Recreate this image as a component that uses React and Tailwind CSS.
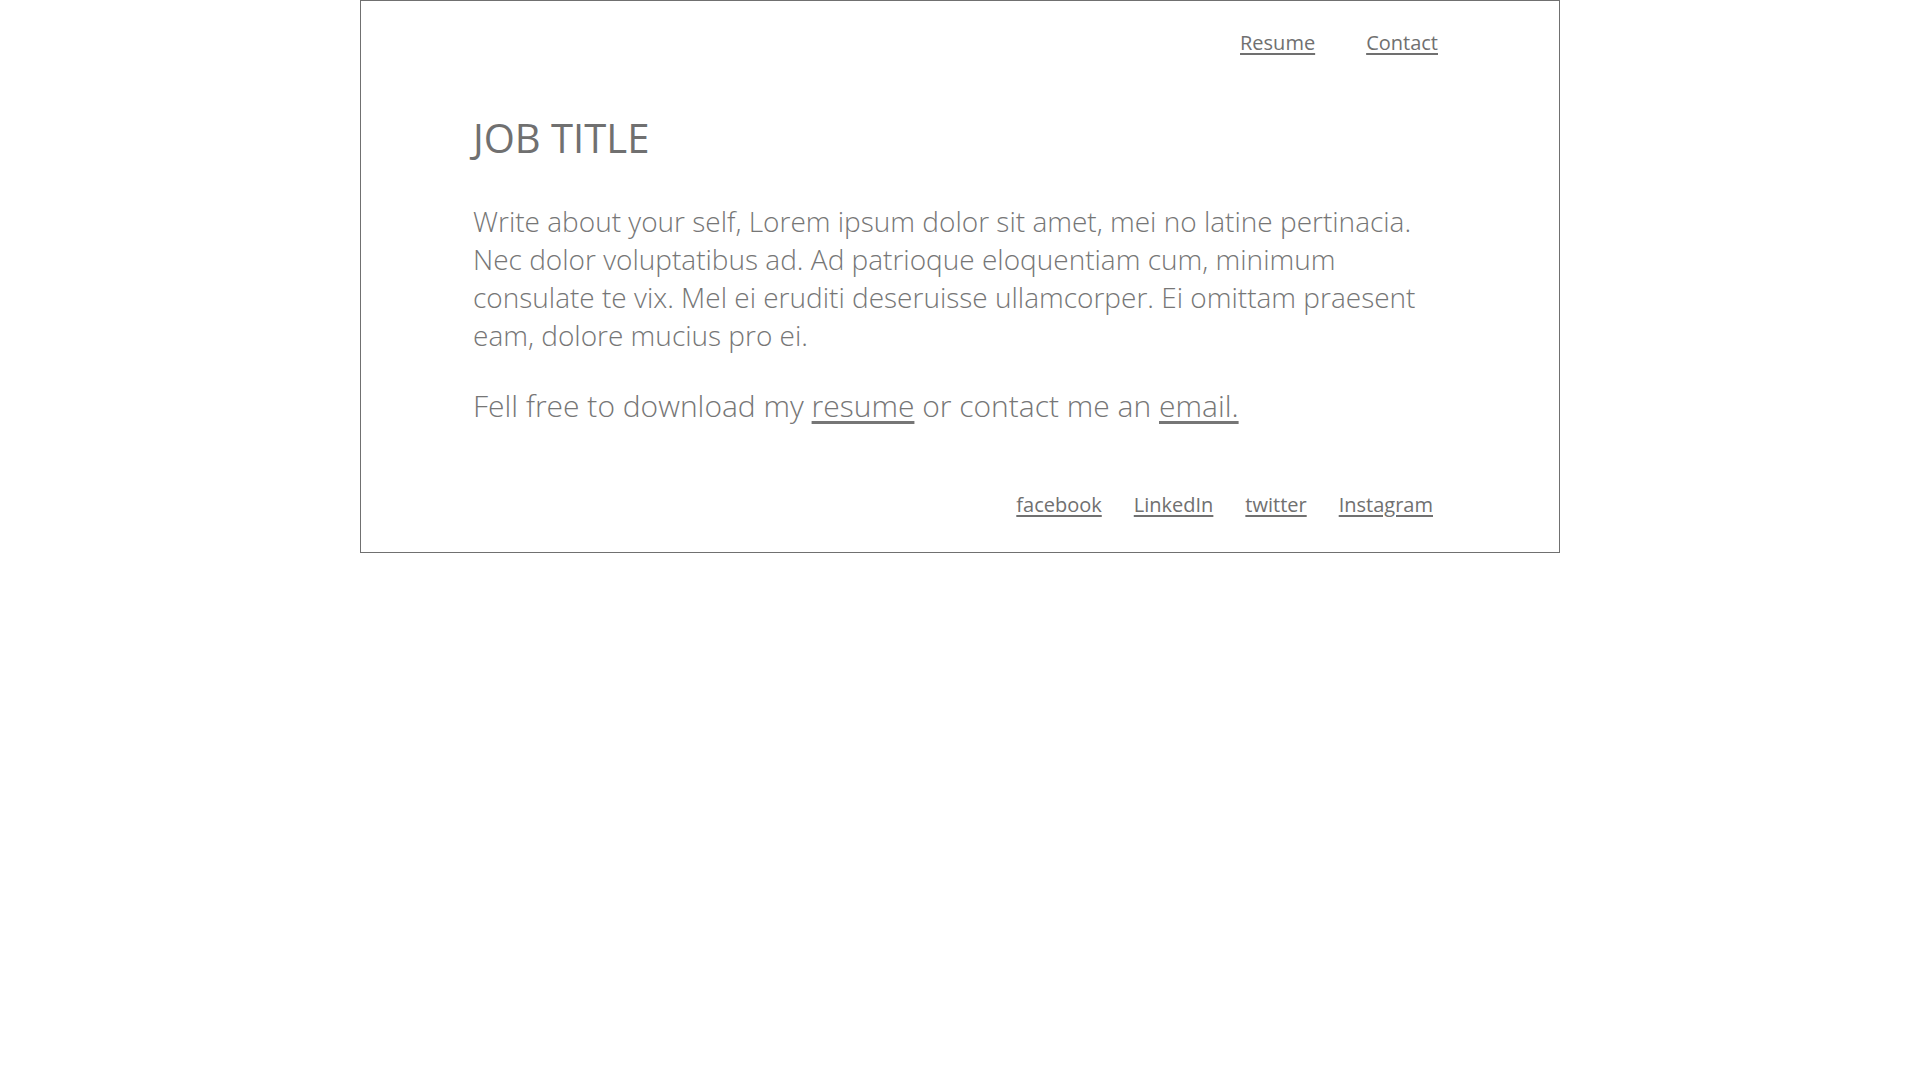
export default function App() {
  const socials = ['facebook', 'LinkedIn', 'twitter', 'Instagram'];

  return (
    <div className="flex justify-center bg-white" style={{ fontFamily: '"Open Sans", "Liberation Sans", sans-serif' }}>
      <div className="w-[1200px] border border-[#707070] px-[112px] text-[#707070]">
        {/* Top nav */}
        <nav className="flex justify-end gap-[51px] pt-[28px] pr-[9px] text-[20px] leading-[28px]">
          <a href="#" className="underline underline-offset-[3px]">Resume</a>
          <a href="#" className="underline underline-offset-[3px]">Contact</a>
        </nav>

        <h1 className="mt-[54px] text-[40px] leading-[54px] font-normal">JOB TITLE</h1>

        <p className="mt-[37px] text-[28px] leading-[38px] font-light text-[#767676]">
          Write about your self, Lorem ipsum dolor sit amet, mei no latine pertinacia. Nec dolor voluptatibus ad. Ad
          patrioque eloquentiam cum, minimum consulate te vix. Mel ei eruditi deseruisse ullamcorper. Ei omittam
          praesent eam, dolore mucius pro ei.
        </p>

        <p className="mt-[30px] text-[30px] leading-[44px] font-light text-[#767676]">
          Fell free to download my{' '}
          <a href="#" className="underline underline-offset-[4px]">resume</a> or contact me an{' '}
          <a href="#" className="underline underline-offset-[4px]">email.</a>
        </p>

        {/* Social links */}
        <div className="mt-[63px] flex justify-end gap-[32px] pr-[14px] pb-[33px] text-[20px] leading-[28px]">
          {socials.map((s) => (
            <a key={s} href="#" className="underline underline-offset-[3px]">
              {s}
            </a>
          ))}
        </div>
      </div>
    </div>
  );
}
